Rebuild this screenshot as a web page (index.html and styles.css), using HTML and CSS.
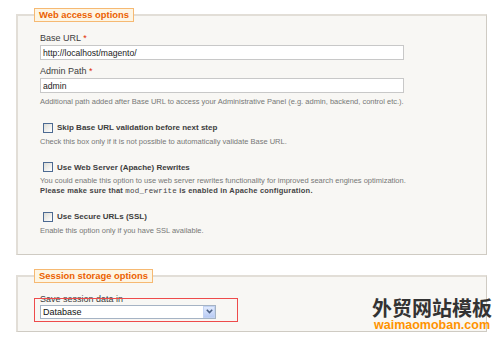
FILE: index.html
```html
<!DOCTYPE html>
<html lang="en">
<head>
    <meta charset="UTF-8">
    <title>Magento Installation - Configuration</title>
    <link rel="stylesheet" href="styles.css">
</head>
<body>
    <fieldset class="group">
        <legend>Web access options</legend>
        <div class="field">
            <label class="label">Base URL <span class="req">*</span></label>
            <input class="text" type="text" value="http://localhost/magento/">
        </div>
        <div class="field">
            <label class="label">Admin Path <span class="req">*</span></label>
            <input class="text" type="text" value="admin">
            <p class="note">Additional path added after Base URL to access your Administrative Panel (e.g. admin, backend, control etc.).</p>
        </div>
        <div class="check-row">
            <span class="box"></span>
            <span class="check-label">Skip Base URL validation before next step</span>
        </div>
        <p class="note">Check this box only if it is not possible to automatically validate Base URL.</p>
        <div class="check-row">
            <span class="box"></span>
            <span class="check-label">Use Web Server (Apache) Rewrites</span>
        </div>
        <p class="note">You could enable this option to use web server rewrites functionality for improved search engines optimization.</p>
        <p class="warn">Please make sure that <code>mod_rewrite</code> is enabled in Apache configuration.</p>
        <div class="check-row">
            <span class="box"></span>
            <span class="check-label">Use Secure URLs (SSL)</span>
        </div>
        <p class="note">Enable this option only if you have SSL available.</p>
    </fieldset>

    <fieldset class="group session">
        <legend>Session storage options</legend>
        <label class="label">Save session data in</label>
        <div class="select">
            <span class="select-value">Database</span>
            <span class="select-btn">
                <svg width="7" height="5" viewBox="0 0 7 5"><path d="M0.8 0.8 L3.5 3.5 L6.2 0.8" fill="none" stroke="#4d6185" stroke-width="1.6"/></svg>
            </span>
            <div class="highlight"></div>
        </div>
    </fieldset>

    <div class="watermark">
        <div class="wm-cn">外贸网站模板</div>
        <div class="wm-en">waimaomoban.com</div>
    </div>
</body>
</html>
```

FILE: styles.css
```css
body {
    margin: 0;
    background: #fff;
    font-family: "Liberation Sans", Arial, sans-serif;
    color: #333;
    position: relative;
    height: 337px;
    overflow: hidden;
}
.group {
    margin: 8px 0 0 16px;
    width: 446px;
    padding: 11px 0 18px 22px;
    background: #f8f7f4;
    border-style: solid;
    border-width: 2px 1px 1px 2px;
    border-color: #e2ded7 #cfcbc3 #cfcbc3 #e2ded7;
}
.group legend {
    margin-left: -6px;
    padding: 0 4px;
    height: 12px;
    line-height: 12px;
    font-size: 9.4px;
    font-weight: bold;
    color: #eb6100;
    background: #fdf5e4;
    border: 1px solid #f6b972;
}
.field {
    margin-bottom: 6px;
}
.label {
    display: block;
    font-size: 9px;
    line-height: 11px;
    color: #3d3d3d;
}
.req {
    color: #e02b00;
}
.text {
    display: block;
    box-sizing: border-box;
    width: 364px;
    height: 15px;
    margin: 1px 0 0 0;
    padding: 0 2px;
    border: 1px solid #c8c8c8;
    background: #fff;
    font-family: "Liberation Sans", Arial, sans-serif;
    font-size: 8.6px;
    color: #222;
}
.note {
    margin: 4px 0 0 0;
    font-size: 7.5px;
    line-height: 10px;
    color: #777;
}
.check-row {
    display: flex;
    align-items: center;
    gap: 4px;
    margin: 15.5px 0 0 3px;
}
.box {
    box-sizing: border-box;
    width: 10px;
    height: 10px;
    border: 1px solid #4c6a92;
    background: linear-gradient(135deg, #dcdcd6, #fff);
}
.check-label {
    font-size: 8px;
    font-weight: bold;
    color: #3d3d3d;
}
.warn {
    margin: 0;
    font-size: 7.5px;
    line-height: 10px;
    font-weight: bold;
    letter-spacing: 0.2px;
    color: #444;
}
.warn code {
    font-family: "Liberation Mono", monospace;
    font-weight: normal;
    font-size: 7.5px;
}
.session {
    margin-top: 14px;
    padding-top: 11px;
    padding-bottom: 12px;
}
.select {
    position: relative;
    display: flex;
    align-items: center;
    box-sizing: border-box;
    width: 176px;
    height: 14px;
    margin-top: 0;
    border: 1px solid #a5b3c4;
    background: #fff;
}
.select-value {
    flex: 1;
    padding-left: 2px;
    font-size: 9px;
    color: #111;
}
.select-btn {
    display: flex;
    align-items: center;
    justify-content: center;
    box-sizing: border-box;
    width: 12px;
    height: 12px;
    border: 1px solid #c3d3f3;
    background: linear-gradient(#e1eafd, #b9cbf4);
}
.highlight {
    position: absolute;
    left: -7px;
    top: -8px;
    width: 202px;
    height: 22px;
    border: 1px solid #ee4b4b;
}
.watermark {
    position: absolute;
    left: 372px;
    top: 296px;
    text-align: center;
}
.wm-cn {
    font-family: "Noto Sans CJK SC", sans-serif;
    font-size: 20px;
    line-height: 23px;
    font-weight: bold;
    color: #333;
}
.wm-en {
    font-family: "Liberation Sans", Arial, sans-serif;
    font-size: 12.5px;
    line-height: 13px;
    font-weight: bold;
    color: #ff9300;
}
```
